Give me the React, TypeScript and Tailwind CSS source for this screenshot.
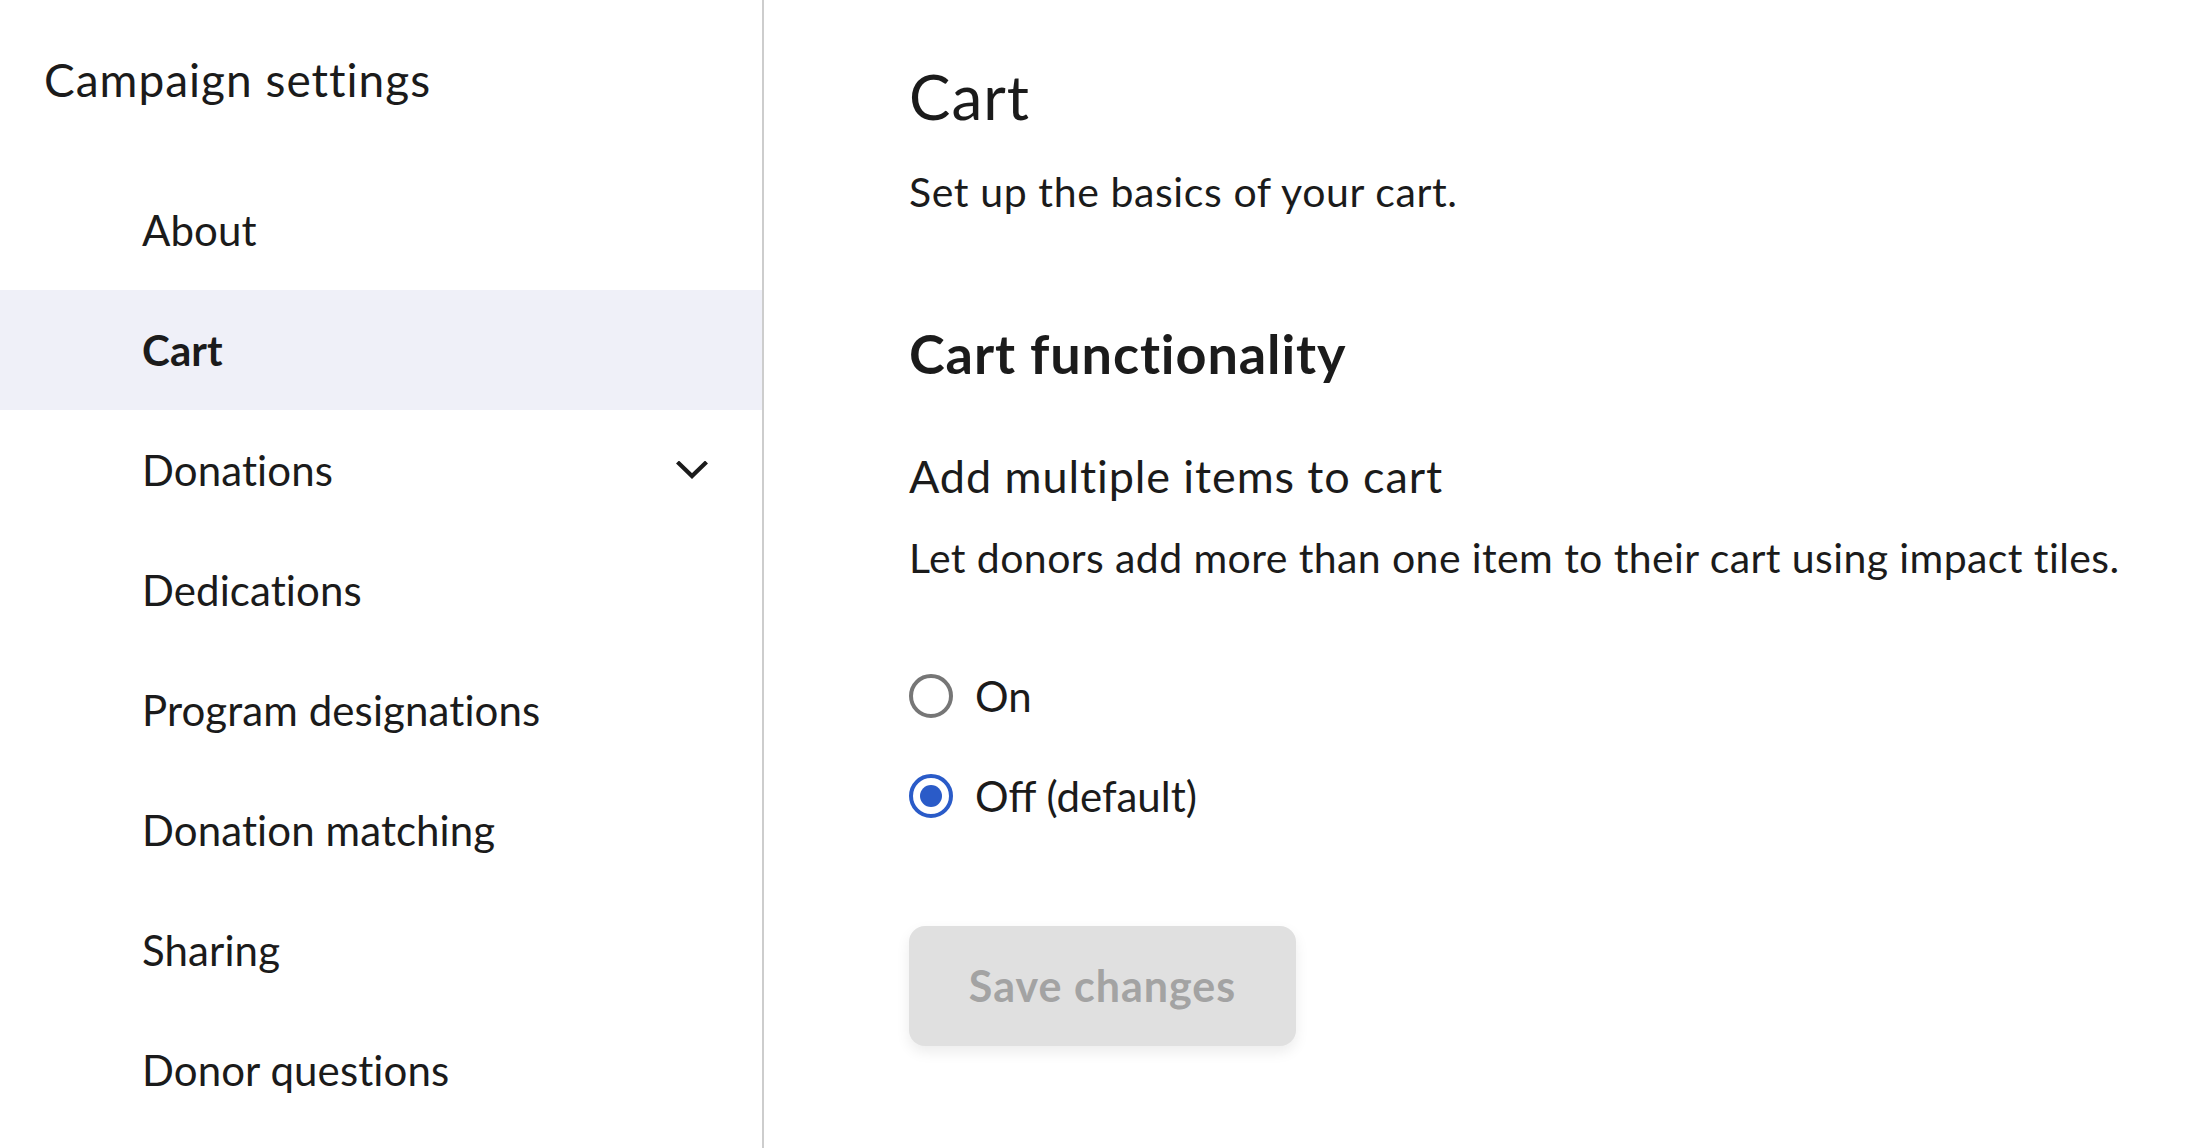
import { ReactNode } from 'react'

const navItems = [
  { label: 'About' },
  { label: 'Cart', active: true },
  { label: 'Donations', expandable: true },
  { label: 'Dedications' },
  { label: 'Program designations' },
  { label: 'Donation matching' },
  { label: 'Sharing' },
  { label: 'Donor questions' },
]

function Chevron() {
  return (
    <svg width="32" height="18" viewBox="0 0 32 18" fill="none">
      <path d="M3 2.5 L16 15 L29 2.5" stroke="#1b1b1b" strokeWidth="4.2" strokeLinecap="square" />
    </svg>
  )
}

function Radio({ checked, children }: { checked?: boolean; children: ReactNode }) {
  return (
    <label className="flex h-[60px] items-center gap-[22px]">
      {checked ? (
        <span className="flex h-[44px] w-[44px] items-center justify-center rounded-full border-[4px] border-[#2a5bc8]">
          <span className="h-[22px] w-[22px] rounded-full bg-[#2a5bc8]" />
        </span>
      ) : (
        <span className="h-[44px] w-[44px] rounded-full border-[4px] border-[#767676]" />
      )}
      <span className="text-[42px] leading-none">{children}</span>
    </label>
  )
}

export default function App() {
  return (
    <div
      className="flex h-[1148px] w-full overflow-hidden bg-white text-[#1b1b1b]"
      style={{ fontFamily: 'Lato, "Noto Sans", sans-serif' }}
    >
      {/* Sidebar */}
      <aside className="w-[764px] shrink-0 border-r-2 border-[#cdcdcd]">
        <h2 className="pl-[44px] pt-[57px] text-[46px] leading-none tracking-[1px]">Campaign settings</h2>
        <nav className="mt-[67px]">
          {navItems.map((item) => (
            <div
              key={item.label}
              className={`flex h-[120px] items-center justify-between pl-[142px] pr-[54px] text-[42px] tracking-[0.1px] ${
                item.active ? 'bg-[#eff0f8] font-bold' : ''
              }`}
            >
              <span>{item.label}</span>
              {item.expandable && <Chevron />}
            </div>
          ))}
        </nav>
      </aside>

      {/* Content */}
      <main className="flex-1 pl-[145px]">
        <h1 className="pt-[65px] text-[62px] leading-none tracking-[1px]">Cart</h1>
        <p className="mt-[44px] text-[41px] leading-none tracking-[0.6px]">Set up the basics of your cart.</p>

        <h3 className="mt-[115px] text-[54px] font-bold leading-none tracking-[0.9px]">Cart functionality</h3>
        <p className="mt-[73px] text-[45px] leading-none tracking-[0.9px]">Add multiple items to cart</p>
        <p className="mt-[38px] text-[41px] leading-none tracking-[0.4px]">
          Let donors add more than one item to their cart using impact tiles.
        </p>

        <div className="mt-[88px] flex flex-col gap-[40px]">
          <Radio>On</Radio>
          <Radio checked>Off (default)</Radio>
        </div>

        <button
          disabled
          className="mt-[100px] h-[120px] w-[387px] rounded-[16px] bg-[#e0e0e0] text-[43px] font-bold tracking-[1px] text-[#a3a3a3] shadow-[0_6px_14px_rgba(0,0,0,0.08)]"
        >
          Save changes
        </button>
      </main>
    </div>
  )
}
